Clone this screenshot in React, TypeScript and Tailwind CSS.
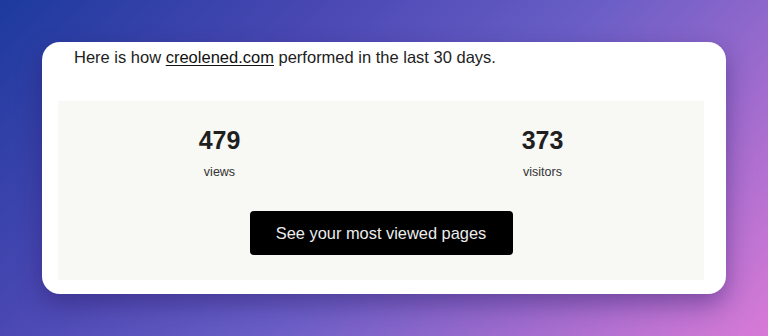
export default function App() {
  return (
    <div
      className="w-[768px] h-[336px] overflow-hidden pt-[42px] pl-[42px] bg-[linear-gradient(135deg,#1d3a9e_0%,#4a48b3_30%,#6a5ec6_55%,#d87ad6_100%)]"
      style={{ fontFamily: '"Liberation Sans", Arial, sans-serif' }}
    >
      <div className="w-[684px] h-[252px] rounded-[18px] bg-white pt-[3px] pl-[16px] pr-[22px] pb-[14px] shadow-[0_10px_24px_rgba(40,25,100,0.45)]">
        <p className="pl-4 text-[16.5px] leading-[24px] text-[#222]">
          Here is how <span className="underline underline-offset-2 text-[#111]">creolened.com</span> performed in the last 30 days.
        </p>

        <div className="mt-[32px] bg-[#f8f8f4] pt-[26px] pb-[25px] flex flex-col items-center">
          <div className="w-full grid grid-cols-2">
            <div className="flex flex-col items-center">
              <span className="text-[25px] leading-[26px] font-bold text-[#1f1f1f]">479</span>
              <span className="mt-[11px] text-[12.5px] leading-[17px] text-[#333]">views</span>
            </div>
            <div className="flex flex-col items-center">
              <span className="text-[25px] leading-[26px] font-bold text-[#1f1f1f]">373</span>
              <span className="mt-[11px] text-[12.5px] leading-[17px] text-[#333]">visitors</span>
            </div>
          </div>
          <button className="mt-[30px] w-[263px] h-[44px] rounded-[4px] bg-black text-[16.4px] text-[#ececec]">
            See your most viewed pages
          </button>
        </div>
      </div>
    </div>
  );
}
